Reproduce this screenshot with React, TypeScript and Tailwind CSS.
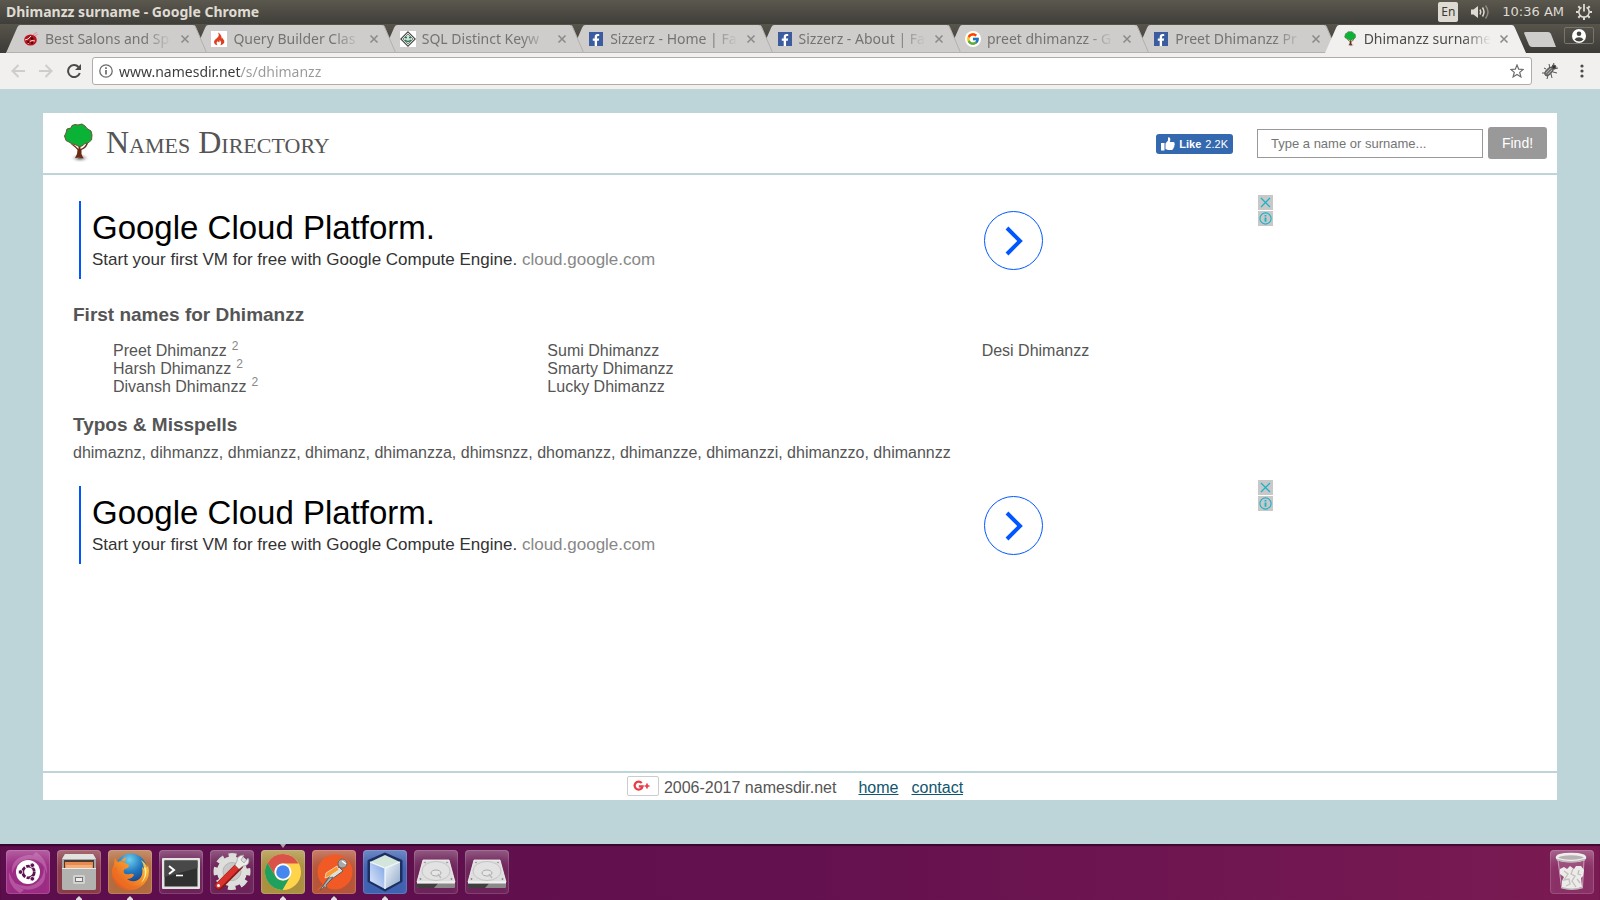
import type { ReactNode } from "react";
import { FaFacebookF } from "react-icons/fa";
import { FcGoogle } from "react-icons/fc";

/* ---------- favicons ---------- */

function TreeIcon({ className }: { className: string }) {
  return (
    <svg viewBox="0 0 30 40" className={className} aria-hidden="true">
      <defs>
        <radialGradient id="shade">
          <stop offset="0" stopColor="#555" />
          <stop offset="1" stopColor="#fff" stopOpacity="0" />
        </radialGradient>
      </defs>
      <ellipse cx="17" cy="35" rx="10" ry="5" fill="url(#shade)" />
      <path d="M8 21Q13 25 14.500 27L14 31L12 35L16 34.500L20.500 35.500L18.500 31L18.500 27Q24 25 25 20L23.500 20Q22 24.500 17.500 26V21H15.500V26Q12 22 9 21Z" fill="#6b2b12" />
      <path d="M9 2.500L12 1.500 15 2 19 1 22 3 24 5.500 28 8 29 12 28.500 17 25 20 22 20.500 19 23 16 23.500 12 21.500 9 21 6 19 3 17.500 1.500 13 3 10 4 6 8 5Z" fill="#0ab336" stroke="#6a5436" strokeWidth="1" />
    </svg>
  );
}

function FacebookFavicon() {
  return (
    <span className="flex size-[14px] items-end justify-end bg-[#3b5c9f] text-white">
      <FaFacebookF className="mr-px size-3" />
    </span>
  );
}

function SalonFavicon() {
  return (
    <svg viewBox="0 0 16 16" className="size-4" aria-hidden="true">
      <ellipse cx="7.500" cy="9" rx="6.300" ry="5.600" fill="#b8141c" />
      <path d="M10 4L14 1M12 5L15 3" stroke="#e58a90" strokeWidth="1" />
      <path d="M2 9Q5 9 8 5M5 13Q6 10 9 9.500L12 10" stroke="#fbdcdc" strokeWidth="1" fill="none" />
      <circle cx="9" cy="7.500" r="1.300" fill="#3d0709" />
      <circle cx="5.500" cy="11" r="1.200" fill="#3d0709" />
      <circle cx="9" cy="12" r="1" fill="#3d0709" />
    </svg>
  );
}

function FlameFavicon() {
  return (
    <svg viewBox="0 0 16 16" className="size-4 bg-white" aria-hidden="true">
      <path d="M7 1.500C8.300 4 8 5 6 7C3.800 9 2.300 10 3.500 12.500C4.200 13.700 5.200 14 6.500 14.300C5 12.500 5.500 11 7 10C7 11 7.500 11.500 8.300 11C9 10.500 8.500 9.500 8.500 9C10.500 10.500 10.500 12.500 9.300 14.300C12.500 13.700 14 11.500 13 9.300C12.300 8.200 11.500 8 11.700 6.500C11 7 10.800 7.800 11 8.500C10.500 6 10.500 3.500 7 1.500Z" fill="#dd4020" />
    </svg>
  );
}

function SqlFavicon() {
  return (
    <svg viewBox="0 0 16 16" className="size-4 bg-white" aria-hidden="true">
      <path d="M8 .8L15.200 8L8 15.200L.8 8Z" fill="none" stroke="#444" strokeWidth="1.100" />
      <path d="M8 3L13 8L8 13L3 8Z" fill="#cfe3d8" stroke="#555" strokeWidth=".7" />
      <path d="M5 6.500H7M9 6.500H11M5 9Q8 12 11 9" stroke="#247a52" strokeWidth="1.400" fill="none" />
    </svg>
  );
}

function GoogleFavicon() {
  return (
    <span className="flex size-4 items-center justify-center rounded-full bg-white">
      <FcGoogle className="size-[14px]" />
    </span>
  );
}

/* ---------- window chrome ---------- */

function CloseGlyph() {
  return (
    <svg viewBox="0 0 10 10" className="size-[10px]" aria-hidden="true">
      <path d="M1.500 1.500L8.500 8.500M8.500 1.500L1.500 8.500" stroke="currentColor" strokeWidth="1.600" />
    </svg>
  );
}

function Tab({ title, icon, active, z }: { title: string; icon: ReactNode; active?: boolean; z: number }) {
  const fill = active ? "#f2f0ee" : "#cfcdcb";
  return (
    <div className="relative min-w-0 flex-1" style={{ zIndex: z }}>
      <div className="-mr-[13px] flex h-7">
        <svg viewBox="0 0 14 28" className="h-7 w-[14px] shrink-0" aria-hidden="true">
          <path d="M0 28L11 3Q12 0 14 0V28Z" fill={fill} />
          {!active && <path d="M0 27.500H14" stroke="#b3b0ad" />}
        </svg>
        <div className={active ? "flex min-w-0 flex-1 items-center bg-[#f2f0ee] pl-[3px] text-[#4c4c4c]" : "flex min-w-0 flex-1 items-center border-b border-[#b3b0ad] bg-[#cfcdcb] pl-[3px] text-[#757370]"}>
          <span className="flex w-4 shrink-0 justify-center">{icon}</span>
          <button type="button" className="ml-1.5 min-w-0 flex-1 overflow-hidden whitespace-nowrap text-left text-[14px] leading-5 [mask-image:linear-gradient(to_right,black_78%,transparent)]">
            {title}
          </button>
          <button type="button" aria-label={`Close ${title}`} className="ml-2 mr-[3px] text-[#8d8b89]">
            <CloseGlyph />
          </button>
        </div>
        <svg viewBox="0 0 14 28" className="h-7 w-[14px] shrink-0" aria-hidden="true">
          <path d="M0 0Q2 0 3 3L14 28H0Z" fill={fill} />
          {!active && <path d="M1 0Q2 0 3 3L13.500 27.500H0" fill="none" stroke="#b3b0ad" />}
        </svg>
      </div>
    </div>
  );
}

const tabs: { title: string; icon: ReactNode; active?: boolean }[] = [
  { title: "Best Salons and Sp", icon: <SalonFavicon /> },
  { title: "Query Builder Clas", icon: <FlameFavicon /> },
  { title: "SQL Distinct Keyw", icon: <SqlFavicon /> },
  { title: "Sizzerz - Home | Fac", icon: <FacebookFavicon /> },
  { title: "Sizzerz - About | Fa", icon: <FacebookFavicon /> },
  { title: "preet dhimanzz - G", icon: <GoogleFavicon /> },
  { title: "Preet Dhimanzz Pr", icon: <FacebookFavicon /> },
  { title: "Dhimanzz surname", icon: <TreeIcon className="h-4 w-3" />, active: true },
];

function SystemBar() {
  return (
    <div className="flex h-6 items-center bg-linear-to-b from-[#5b584e] to-[#3f3e39] pl-1.5 pr-2 text-[#dfdbd2]">
      <h1 className="flex-1 text-[14px] font-bold leading-6">Dhimanzz surname - Google Chrome</h1>
      <button type="button" className="flex h-5 w-5 items-center justify-center rounded-[2px] bg-[#dfdbd2] text-[12px] text-[#3c3b37]">En</button>
      <button type="button" aria-label="Volume" className="ml-3">
        <svg viewBox="0 0 20 16" className="h-4 w-5" aria-hidden="true">
          <path d="M1 5.500H3.500L8 2V14L3.500 10.500H1Z" fill="#dfdbd2" />
          <g fill="none" strokeWidth="1.500">
            <path d="M10 5.500Q11.500 8 10 10.500M12.500 3.500Q15.500 8 12.500 12.500" stroke="#dfdbd2" />
            <path d="M15.500 1.500Q20.500 8 15.500 14.500" stroke="#8c8980" />
          </g>
        </svg>
      </button>
      <span className="ml-3 font-['DejaVu_Sans',sans-serif] text-[13px]">10:36 AM</span>
      <button type="button" aria-label="Session" className="ml-3">
        <svg viewBox="0 0 16 16" className="size-4" aria-hidden="true" fill="none" stroke="#dfdbd2">
          <path d="M5.500 3.400A5.200 5.200 0 1 0 10.500 3.400" strokeWidth="1.600" />
          <path d="M8 0V7.500" strokeWidth="1.800" />
          <path d="M2.300 2.300L4.200 4.200M13.700 2.300L11.800 4.200M0 8H2.500M16 8H13.500M2.300 13.700L4.200 11.800M13.700 13.700L11.800 11.800M8 16V13.500" strokeWidth="2" />
        </svg>
      </button>
    </div>
  );
}

function TabStrip() {
  return (
    <div className="flex h-[29px] items-end bg-linear-to-b from-[#57544b] to-[#3c3b37] pl-1.5">
      <nav aria-label="Tabs" className="isolate flex min-w-0 flex-1">
        {tabs.map((t, i) => (
          <Tab key={t.title} {...t} z={t.active ? tabs.length + 1 : tabs.length - i} />
        ))}
      </nav>
      <div className="flex h-full w-[87px] shrink-0 items-start justify-end pr-1.5">
        <button type="button" aria-label="New tab" className="mt-2">
          <svg viewBox="0 0 32 15" className="h-[15px] w-8" aria-hidden="true">
            <path d="M2 0H24Q26 0 27 2L32 15H8Q6 15 5 13L0 1Q0 0 2 0Z" fill="#cfcdcb" />
          </svg>
        </button>
        <button type="button" aria-label="Profile" className="ml-2 mt-[3px] flex h-[17px] w-[30px] items-center justify-center rounded-[2px] border border-[#77756d]">
          <svg viewBox="0 0 14 14" className="size-[14px]" aria-hidden="true">
            <circle cx="7" cy="7" r="7" fill="#fff" />
            <circle cx="7" cy="4.800" r="2.300" fill="#45443f" />
            <path d="M2.500 10.500Q4 8.300 7 8.300T11.500 10.500Q9.500 12.500 7 12.500T2.500 10.500Z" fill="#45443f" />
          </svg>
        </button>
      </div>
    </div>
  );
}

function Toolbar() {
  return (
    <div className="flex h-9 items-center bg-[#f2f0ee] pr-2">
      <button type="button" aria-label="Back" className="ml-[11px]">
        <svg viewBox="0 0 14 14" className="size-[14px]" fill="none" stroke="#cfcdcb" strokeWidth="2" aria-hidden="true">
          <path d="M14 7H2M7.500 1L1.500 7L7.500 13" />
        </svg>
      </button>
      <button type="button" aria-label="Forward" className="ml-3.5">
        <svg viewBox="0 0 14 14" className="size-[14px]" fill="none" stroke="#cfcdcb" strokeWidth="2" aria-hidden="true">
          <path d="M0 7H12M6.500 1L12.500 7L6.500 13" />
        </svg>
      </button>
      <button type="button" aria-label="Reload" className="ml-3.5">
        <svg viewBox="0 0 14 14" className="size-[14px]" aria-hidden="true">
          <path d="M12.800 9A6 6 0 1 1 11.500 3" fill="none" stroke="#4a4a4a" strokeWidth="2" />
          <path d="M14 0V6H8Z" fill="#4a4a4a" />
        </svg>
      </button>
      <div className="ml-[11px] flex h-7 min-w-0 flex-1 items-center rounded-[3px] border border-[#b0acaa] bg-white pl-1.5 pr-[7px]">
        <svg viewBox="0 0 14 14" className="size-[14px] shrink-0" aria-hidden="true">
          <circle cx="7" cy="7" r="6.200" fill="none" stroke="#6b6b6b" strokeWidth="1.300" />
          <path d="M7 6V10.500M7 3.300V4.900" stroke="#6b6b6b" strokeWidth="1.700" />
        </svg>
        <input
          aria-label="Address"
          defaultValue="www.namesdir.net/s/dhimanzz"
          className="ml-1.5 h-6 min-w-0 flex-1 bg-linear-[to_right,#3a3a3a_122px,#999_122px] bg-clip-text text-[14px] text-transparent outline-none"
        />
        <button type="button" aria-label="Bookmark">
          <svg viewBox="0 0 14 14" className="size-[14px]" fill="none" stroke="#6b6b6b" strokeWidth="1.200" aria-hidden="true">
            <path d="M7 1L8.700 5.200L13.200 5.500L9.700 8.400L10.900 12.900L7 10.400L3.100 12.900L4.300 8.400L.8 5.500L5.300 5.200Z" />
          </svg>
        </button>
      </div>
      <button type="button" aria-label="Extension" className="ml-2.5">
        <svg viewBox="0 0 16 16" className="size-4" aria-hidden="true" stroke="#555">
          <path d="M4 6L2 5M3 10L0 10M6 12L5 16M9 11L10 15M11 9L15 10M8 5L7 1M10 4L12 0M12 6L16 5" strokeWidth="1" />
          <ellipse cx="7" cy="8.500" rx="5" ry="2.800" transform="rotate(-45 7 8.500)" fill="#777" />
          <circle cx="12" cy="4" r="2" fill="#333" />
          <path d="M4 10L9 5M6 11L10 7" stroke="#bbb" strokeWidth=".8" />
        </svg>
      </button>
      <button type="button" aria-label="Menu" className="ml-[18px] mr-1">
        <svg viewBox="0 0 12 14" className="h-3.5 w-3" fill="#4a4a4a" aria-hidden="true">
          <circle cx="6" cy="2" r="1.600" />
          <circle cx="6" cy="7" r="1.600" />
          <circle cx="6" cy="12" r="1.600" />
        </svg>
      </button>
    </div>
  );
}

/* ---------- web page ---------- */

function SiteHeader() {
  return (
    <header className="flex h-[62px] items-center border-b-2 border-[#bdd4d8] pl-5 pr-2.5">
      <a href="#top" className="flex items-start">
        <TreeIcon className="h-10 w-[30px]" />
        <span className="ml-[13px] font-['Liberation_Serif',serif] text-[32px] leading-[38px] text-[#555] [font-variant:small-caps]">Names Directory</span>
      </a>
      <button type="button" className="ml-auto mt-px flex h-5 items-center rounded-[3px] bg-[#3468af] px-[5px] text-[11px] leading-5 text-white">
        <svg viewBox="0 0 14 14" className="mr-1 size-[14px]" fill="#fff" aria-hidden="true">
          <path d="M0 6H3.500V13.500H0ZM4.500 6.500L7 3.500V1Q7 .2 8 .3Q9.500 .7 9.300 3L8.800 5H12.500Q14 5.300 13.500 6.800Q14.200 7.800 13.200 8.800Q13.600 10 12.500 10.700Q12.700 12.800 10.800 13H7L4.500 12Z" />
        </svg>
        <b>Like</b>
        <span className="ml-1">2.2K</span>
      </button>
      <form className="ml-6 flex items-center" onSubmit={(e) => e.preventDefault()}>
        <input
          type="text"
          aria-label="Name or surname"
          placeholder="Type a name or surname..."
          className="h-[29px] w-[226px] border border-[#999] bg-white px-[13px] text-[13px] placeholder:text-[#757575]"
        />
        <button type="submit" className="ml-[5px] h-8 w-[59px] rounded-[3px] bg-[#999] text-[14px] text-white">Find!</button>
      </form>
    </header>
  );
}

function Ad() {
  return (
    <section aria-label="Advertisement" className="flex h-[90px] w-[1200px] max-w-full">
      <div className="my-1.5 ml-1.5 flex-1 border-l-2 border-[#0057ff] pl-[11px]">
        <h2 className="mt-1.5 text-[33px] leading-[42px] text-black">Google Cloud Platform.</h2>
        <p className="text-[17px] leading-[22px] text-[#333]">
          Start your first VM for free with Google Compute Engine. <span className="text-[#888]">cloud.google.com</span>
        </p>
      </div>
      <button type="button" aria-label="Open" className="mr-[215px] mt-4 flex size-[59px] items-center justify-center rounded-full border border-[#0057ff]">
        <svg viewBox="0 0 18 30" className="h-[30px] w-[18px]" fill="none" stroke="#0057ff" strokeWidth="4" aria-hidden="true">
          <path d="M2 2L15 15L2 28" />
        </svg>
      </button>
      <div className="flex flex-col gap-px text-[#1ab2c8]">
        <button type="button" aria-label="Close ad" className="flex size-[15px] items-center justify-center bg-[#c8c8c8]">
          <svg viewBox="0 0 11 11" className="size-[11px]" fill="none" stroke="currentColor" strokeWidth="1.200" aria-hidden="true">
            <path d="M1 1L10 10M10 1L1 10" />
          </svg>
        </button>
        <button type="button" aria-label="About this ad" className="flex size-[15px] items-center justify-center bg-[#c8c8c8]">
          <svg viewBox="0 0 13 13" className="size-[13px]" fill="none" stroke="currentColor" aria-hidden="true">
            <circle cx="6.500" cy="6.500" r="5.600" strokeWidth="1.100" />
            <path d="M6.500 5.500V9.800M6.500 3V4.600" strokeWidth="1.800" />
          </svg>
        </button>
      </div>
    </section>
  );
}

const nameColumns: { name: string; count?: number }[][] = [
  [{ name: "Preet Dhimanzz", count: 2 }, { name: "Harsh Dhimanzz", count: 2 }, { name: "Divansh Dhimanzz", count: 2 }],
  [{ name: "Sumi Dhimanzz" }, { name: "Smarty Dhimanzz" }, { name: "Lucky Dhimanzz" }],
  [{ name: "Desi Dhimanzz" }],
];

function WebPage() {
  return (
    <div className="flex flex-1 flex-col bg-[#bdd4d8] px-[43px] pb-11 pt-6 font-['Liberation_Sans',Arial,sans-serif] text-[16px] text-[#555]">
      <div className="flex flex-1 flex-col bg-white">
        <SiteHeader />
        <main className="flex-1 pl-[30px] pt-5">
          <Ad />
          <h3 className="mt-[18px] text-[19px] font-bold leading-6">First names for Dhimanzz</h3>
          <div className="mr-[141px] mt-[15px] grid grid-cols-3 pl-10">
            {nameColumns.map((column) => (
              <ul key={column[0].name}>
                {column.map(({ name, count }) => (
                  <li key={name} className="h-[18px] leading-[18px]">
                    <a href="#name">{name}</a>
                    {count && <sup className="ml-[5px] text-[12px] text-[#888]">{count}</sup>}
                  </li>
                ))}
              </ul>
            ))}
          </div>
          <h3 className="mt-[17px] text-[19px] font-bold leading-6">Typos &amp; Misspells</h3>
          <p className="mb-[18px] mt-[7px] leading-[18px]">
            dhimaznz, dihmanzz, dhmianzz, dhimanz, dhimanzza, dhimsnzz, dhomanzz, dhimanzze, dhimanzzi, dhimanzzo, dhimannzz
          </p>
          <Ad />
        </main>
        <footer className="flex h-[29px] items-start justify-center border-t-2 border-[#bdd4d8] pr-2.5 leading-[30px]">
          <button type="button" aria-label="Google Plus" className="mt-[3px] flex h-5 w-8 items-center rounded-[2px] border border-[#ccc] pl-[5px]">
            <svg viewBox="0 0 18 12" className="h-3 w-[18px]" fill="none" stroke="#eb3b43" aria-hidden="true">
              <path d="M8.700 3A4 4 0 1 0 9.600 6.300H5.800" strokeWidth="2.200" />
              <path d="M14 3.500V8.500M11.500 6H16.500" strokeWidth="1.700" />
            </svg>
          </button>
          <span className="ml-[5px]">2006-2017 namesdir.net</span>
          <a href="#home" className="ml-[22px] text-[#0f566e] underline">home</a>
          <a href="#contact" className="ml-[13px] text-[#0f566e] underline">contact</a>
        </footer>
      </div>
    </div>
  );
}

/* ---------- launcher ---------- */

function Drive() {
  return (
    <svg viewBox="0 0 44 44" className="size-11" aria-hidden="true">
      <path d="M9 10H35L41 32H3Z" fill="#dedede" stroke="#fafafa" strokeWidth=".8" />
      <path d="M3 32H41V37Q41 38 40 38H4Q3 38 3 37Z" fill="#8a8a8a" />
      <path d="M3 33.500H24L20 38H4Q3 38 3 37Z" fill="#3f3f3f" />
      <path d="M3 31.500H41V33.500H3Z" fill="#f0f0f0" />
      <ellipse cx="22" cy="21" rx="14" ry="9.500" fill="#e2e2e2" stroke="#c4c4c4" />
      <ellipse cx="22" cy="23" rx="5" ry="3" fill="#e6e6e6" stroke="#aaa" />
      <path d="M24 24L27 28" stroke="#bbb" strokeWidth="1.500" />
      <g fill="#888">
        <circle cx="11" cy="12.500" r=".8" />
        <circle cx="33" cy="12.500" r=".8" />
        <circle cx="6.500" cy="29" r=".9" />
        <circle cx="37.500" cy="29" r=".9" />
      </g>
    </svg>
  );
}

function DashIcon() {
  return (
    <svg viewBox="0 0 44 44" className="size-11" aria-hidden="true">
      <g fill="#e6b4dc" opacity=".3">
        <path d="M6 24Q4 8 22 5Q36 4 39 18Q34 9 24 9Q10 10 6 24Z" />
        <path d="M38 17Q43 32 30 38Q17 43 9 33Q20 39 29 34Q38 29 38 17Z" />
        <path d="M14 43Q2 36 3 22Q7 34 18 40Z" />
        <path d="M30 2Q42 10 41 24Q38 12 27 5Z" />
      </g>
      <circle cx="22" cy="22" r="12" fill="#fff" />
      <circle cx="22.500" cy="22" r="5.800" fill="none" stroke="#5e1250" strokeWidth="2.800" strokeDasharray="10.800 1.350" />
      <g fill="#5e1250" stroke="#fff" strokeWidth=".8">
        <circle cx="14.500" cy="22" r="2.300" />
        <circle cx="26.300" cy="15.200" r="2.300" />
        <circle cx="26.300" cy="28.800" r="2.300" />
      </g>
    </svg>
  );
}

function FilesIcon() {
  return (
    <svg viewBox="0 0 44 44" className="size-11" aria-hidden="true">
      <path d="M8 4H36L39 9V38Q39 40 37 40H7Q5 40 5 38V9Z" fill="#a5a5a3" />
      <path d="M8 4H36L39 9H5Z" fill="#e2e2e0" />
      <path d="M7 10H37V20H7Z" fill="#4b3a33" />
      <path d="M8 12H36V19H8Z" fill="#e98b50" />
      <path d="M9 15H35V19H9Z" fill="#f4ae7b" />
      <path d="M5 18H39V38Q39 40 37 40H7Q5 40 5 38Z" fill="#b2b2b0" />
      <path d="M5 18.500H39" stroke="#e9e9e7" />
      <rect x="16" y="25" width="12" height="9" rx="1.500" fill="#d2d2d0" />
      <rect x="18.500" y="27.500" width="7" height="4" fill="#eee" stroke="#777" />
    </svg>
  );
}

function FirefoxIcon() {
  return (
    <svg viewBox="0 0 44 44" className="size-11" aria-hidden="true">
      <defs>
        <radialGradient id="globe" cx=".45" cy=".2" r=".8">
          <stop offset="0" stopColor="#6fd0ee" />
          <stop offset=".5" stopColor="#2379bf" />
          <stop offset="1" stopColor="#173a80" />
        </radialGradient>
        <linearGradient id="fox" x1="1" y1="0" x2="0" y2="1">
          <stop offset="0" stopColor="#ffe75a" />
          <stop offset=".4" stopColor="#f8962a" />
          <stop offset="1" stopColor="#dc4a1c" />
        </linearGradient>
      </defs>
      <circle cx="23" cy="19" r="15.500" fill="url(#globe)" />
      <path d="M7 8Q8 11 10 12Q13 10 17 12L18 7Q14 9 13 11Q17 13 21 15Q21 18 17 19Q15 20 16 23Q18 25 22 24Q25 23 26 25Q24 29 19 29Q24 33 30 30Q36 26 34 17L36 19Q36 14 33 10Q38 13 39 18L40 15Q43 27 36 34Q29 41 19 40Q7 38 4 26Q3 19 6 15Q6 11 7 8Z" fill="url(#fox)" />
      <path d="M38 18Q40 27 33 33Q39 25 36 17Z" fill="#fff1a0" />
      <path d="M5 17Q4 32 18 38Q28 40 34 35Q23 38 15 31Q8 26 9 18Z" fill="#ef6c24" opacity=".7" />
    </svg>
  );
}

function TerminalIcon() {
  return (
    <svg viewBox="0 0 44 44" className="size-11" aria-hidden="true">
      <rect x="3" y="8" width="38" height="31" rx="1" fill="#e3e3e1" />
      <rect x="5.500" y="10.500" width="33" height="26" fill="#303030" />
      <path d="M5.500 10.500H38.500V18L5.500 27Z" fill="#484848" />
      <path d="M10 16L15 20L10 24" fill="none" stroke="#fff" strokeWidth="2" />
      <path d="M17 25.500H24" stroke="#fff" strokeWidth="1.600" />
    </svg>
  );
}

function SettingsIcon() {
  return (
    <svg viewBox="0 0 44 44" className="size-11" aria-hidden="true">
      <circle cx="22" cy="21.500" r="15.500" fill="none" stroke="#dcdcda" strokeWidth="6" strokeDasharray="7.400 4.774" strokeDashoffset="3.700" />
      <circle cx="22" cy="21.500" r="11" fill="none" stroke="#dededc" strokeWidth="8" />
      <circle cx="22" cy="21.500" r="9" fill="#c9c9c7" stroke="#b5b5b3" strokeWidth="1" />
      <path d="M29 16L9 36" stroke="#8f1512" strokeWidth="8" strokeLinecap="round" />
      <path d="M28 16L8.500 35.500" stroke="#d9322c" strokeWidth="6" strokeLinecap="round" />
      <circle cx="8.500" cy="35.500" r="1.500" fill="#fff" />
      <path d="M25 15L29 19L33 16Q39 16 39 10L38 8L34 13L31 10L34 5Q27 5 27 11Z" fill="#ecece9" stroke="#999" strokeWidth=".7" />
    </svg>
  );
}

function ChromeIcon() {
  return (
    <svg viewBox="0 0 44 44" className="size-11" aria-hidden="true">
      <circle cx="22" cy="22" r="18" fill="#ffd34a" />
      <path d="M22 4A18 18 0 0 1 37.600 13.500H22A8.500 8.500 0 0 0 14.600 26.200L6.400 13Q12 4 22 4Z" fill="#d9534a" />
      <path d="M6.400 13L14.600 26.200A8.500 8.500 0 0 0 29.400 26.200L21.500 40A18 18 0 0 1 6.400 13Z" fill="#1fa05e" />
      <circle cx="22" cy="22" r="8.500" fill="#fff" />
      <circle cx="22" cy="22" r="6.800" fill="#4587ee" />
    </svg>
  );
}

function PostmanIcon() {
  return (
    <svg viewBox="0 0 44 44" className="size-11" aria-hidden="true">
      <circle cx="23" cy="22" r="17.500" fill="#f15a24" />
      <path d="M5 40L13 32L17 37Z" fill="#f15a24" />
      <path d="M27 17L17 27L8 40L11 38L20 29L31 21Z" fill="#ddd" stroke="#5f5a56" strokeWidth="1" />
      <path d="M25 16L14 23L13 28L16 27L27 20Z" fill="#f79a31" stroke="#eee" strokeWidth=".7" />
      <path d="M17 28L21 27L14 35L15 38L11 36Z" fill="#b9b9b9" stroke="#555" strokeWidth=".7" />
      <circle cx="30.500" cy="13.500" r="4.500" fill="#a9a9a7" stroke="#666" />
      <path d="M30 11L34 14" stroke="#fff" strokeWidth="1.500" />
    </svg>
  );
}

function CubeIcon() {
  return (
    <svg viewBox="0 0 44 44" className="size-11" aria-hidden="true">
      <defs>
        <linearGradient id="cubeLeft" x1="0" y1="1" x2="1" y2="0">
          <stop offset="0" stopColor="#dfeafc" />
          <stop offset="1" stopColor="#7fa2e2" />
        </linearGradient>
        <linearGradient id="cubeRight" x1="0" y1="0" x2="1" y2="1">
          <stop offset="0" stopColor="#f2f6fa" />
          <stop offset="1" stopColor="#8fa9c9" />
        </linearGradient>
      </defs>
      <path d="M22 4L38 11V31L22 40L6 31V11Z" fill="#1c2f60" stroke="#1c2f60" strokeWidth="3" strokeLinejoin="round" />
      <path d="M22 5L37 12L22 18L7 12Z" fill="#d4e6dc" />
      <path d="M7 12L22 18V39L7 31Z" fill="url(#cubeLeft)" />
      <path d="M37 12L22 18V39L37 31Z" fill="url(#cubeRight)" />
      <path d="M7 12L22 18L37 12M22 18V39" fill="none" stroke="#f5faff" strokeWidth="1.200" />
    </svg>
  );
}

function TrashIcon() {
  return (
    <svg viewBox="0 0 44 44" className="size-11" aria-hidden="true">
      <path d="M8 9H34L32 38Q22 42 12 38Z" fill="#c48bae" opacity=".3" />
      <path d="M8 10L11.500 37M34 10L32.500 37" stroke="#c9a3bb" strokeWidth="1" />
      <path d="M10 19L14 17L17 19L20 16L24 19L26 16L31 16L34 20L33 26L31 28L32 37Q22 41 12 38L12 31L14 27L10 24Z" fill="#ecebe9" />
      <path d="M14 21L18 24L14 30L19 29L20 34L16 36M23 19L21 24L25 26L22 31L26 37M29 20L28 24L31 25M27 29L30 33" fill="none" stroke="#c2c0be" strokeWidth="1.300" />
      <ellipse cx="21" cy="7.500" rx="14" ry="3.500" fill="#b9b0b5" stroke="#efeeec" strokeWidth="2.500" />
      <path d="M7 9.500Q21 14 35 9.500" fill="none" stroke="#bdbab8" strokeWidth="1.500" />
      <path d="M11 37.500Q22 41 33 37.500" fill="none" stroke="#bbb" strokeWidth="1.500" />
    </svg>
  );
}

function Launcher({ label, tile, running, focused, children }: { label: string; tile: string; running?: boolean; focused?: boolean; children: ReactNode }) {
  return (
    <div className="relative flex h-full items-center">
      {focused && (
        <svg viewBox="0 0 6 4" className="absolute left-1/2 top-0 h-1 w-1.5 -translate-x-1/2" aria-hidden="true">
          <path d="M0 0H6L3 4Z" fill="#aaa" />
        </svg>
      )}
      <button type="button" aria-label={label} className={`flex size-11 items-center justify-center rounded-[4px] shadow-[inset_0_0_0_1px_rgba(255,255,255,0.14),inset_0_14px_14px_-8px_rgba(255,255,255,0.3)] ${tile}`}>
        {children}
      </button>
      {running && (
        <svg viewBox="0 0 6 4" className="absolute bottom-0 left-1/2 h-1 w-1.5 -translate-x-1/2" aria-hidden="true">
          <path d="M0 4H6V3L3 0L0 3Z" fill="#ddd" />
        </svg>
      )}
    </div>
  );
}

function LauncherBar() {
  return (
    <nav aria-label="Launcher" className="flex h-14 items-center gap-[7px] bg-linear-to-r from-[#5c0d4c] via-[#64114f] to-[#7a1a52] px-1.5 shadow-[inset_0_2px_1px_rgba(30,0,25,0.6)]">
      <Launcher label="Dash" tile="bg-[#9c2b83]"><DashIcon /></Launcher>
      <Launcher label="Files" tile="bg-[#8b3a48]" running><FilesIcon /></Launcher>
      <Launcher label="Firefox" tile="bg-[#b26b3f]" running><FirefoxIcon /></Launcher>
      <Launcher label="Terminal" tile="bg-[#6d2359]"><TerminalIcon /></Launcher>
      <Launcher label="Settings" tile="bg-[#6d2359]"><SettingsIcon /></Launcher>
      <Launcher label="Chrome" tile="bg-[#ab903f]" running focused><ChromeIcon /></Launcher>
      <Launcher label="Postman" tile="bg-[#b55539]" running><PostmanIcon /></Launcher>
      <Launcher label="NetBeans" tile="bg-[#3f62b0]" running><CubeIcon /></Launcher>
      <Launcher label="Drive 1" tile="bg-[#6d2359]"><Drive /></Launcher>
      <Launcher label="Drive 2" tile="bg-[#6d2359]"><Drive /></Launcher>
      <div className="ml-auto h-full">
        <Launcher label="Trash" tile="bg-[#8a3066]"><TrashIcon /></Launcher>
      </div>
    </nav>
  );
}

export default function App() {
  return (
    <div className="flex min-h-screen flex-col font-['Noto_Sans',sans-serif]">
      <SystemBar />
      <TabStrip />
      <Toolbar />
      <WebPage />
      <LauncherBar />
    </div>
  );
}
